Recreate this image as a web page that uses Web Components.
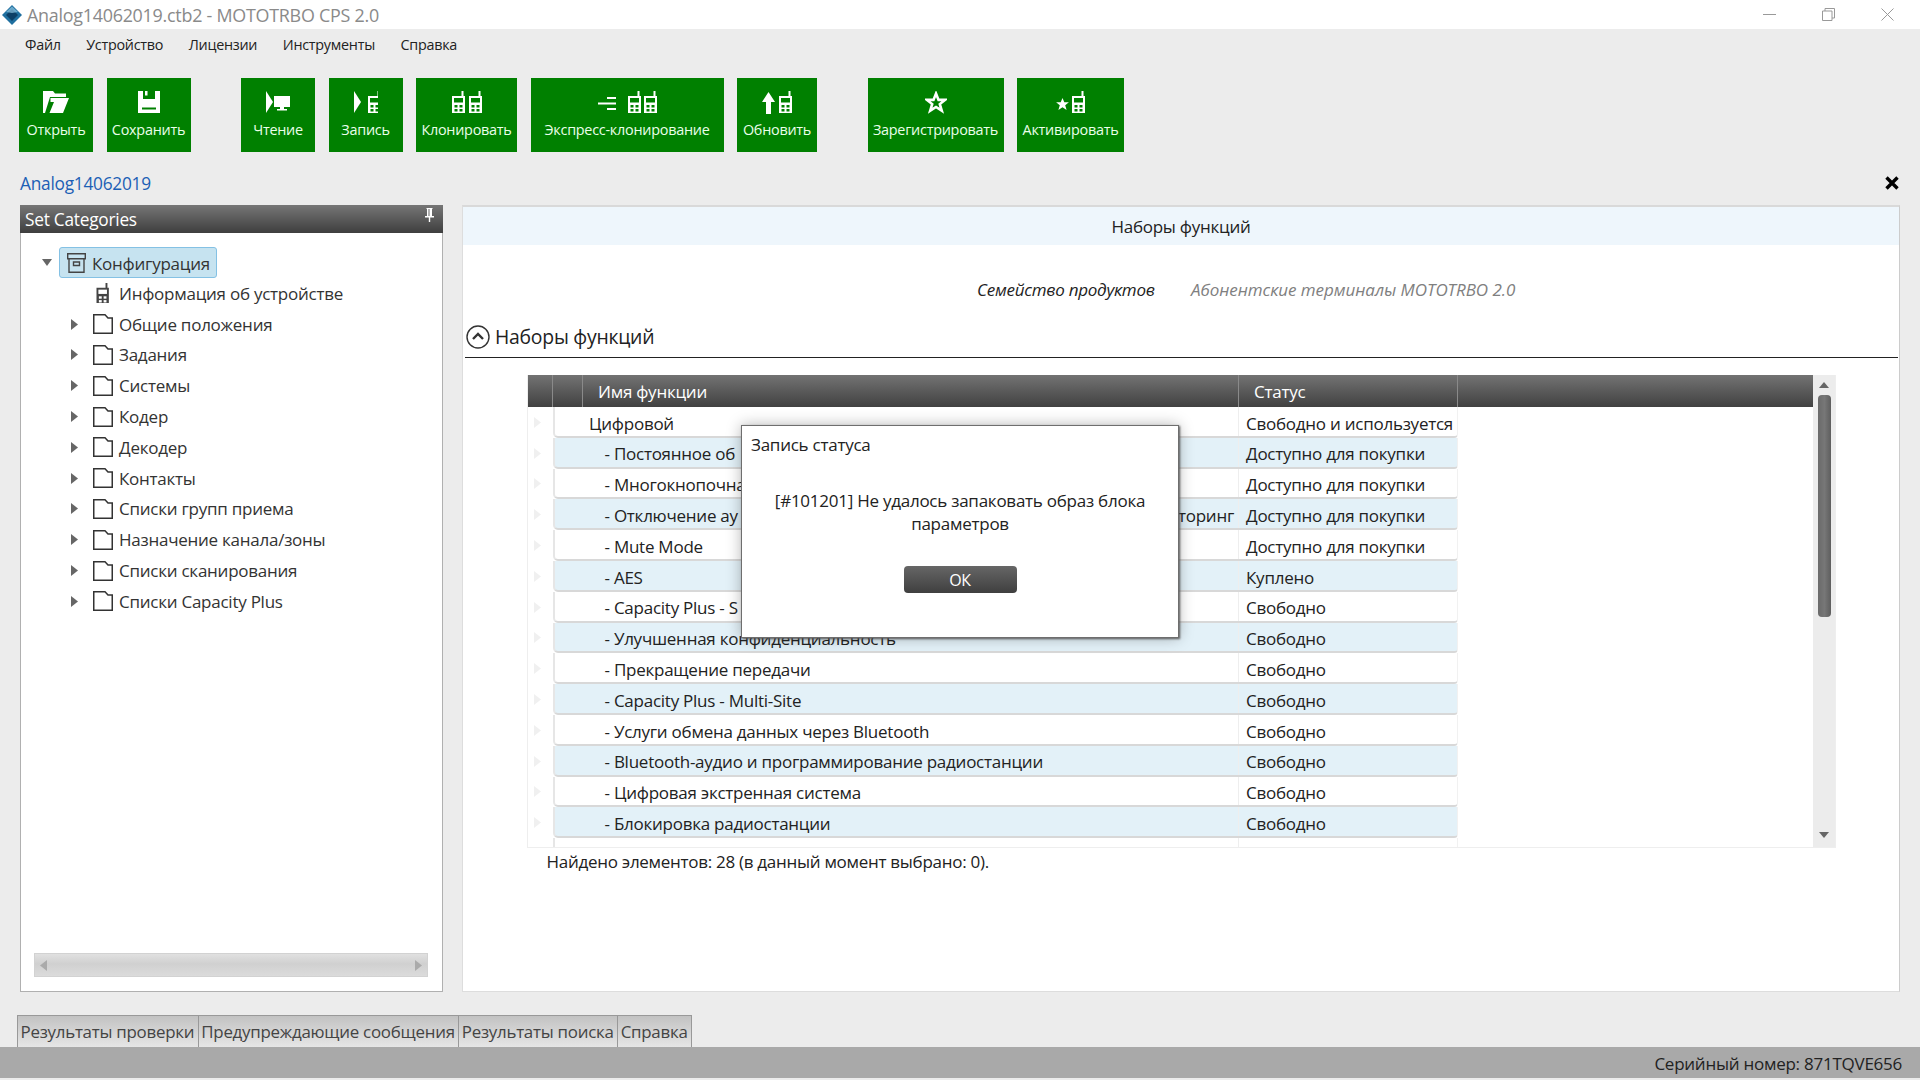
<!DOCTYPE html>
<html lang="ru"><head><meta charset="utf-8"><title>MOTOTRBO CPS 2.0</title>
<style>
html,body{margin:0;padding:0;width:1920px;height:1080px;overflow:hidden;background:#ececec}
body{font-family:"Open Sans","Noto Sans",sans-serif;font-size:17px;color:#222;letter-spacing:-.25px;position:relative}
</style></head><body>
<app-titlebar>Analog14062019.ctb2 - MOTOTRBO CPS 2.0</app-titlebar>
<app-menu><span>Файл</span><span>Устройство</span><span>Лицензии</span><span>Инструменты</span><span>Справка</span></app-menu>
<app-toolbar>
<tool-btn w="74" icon="open">Открыть</tool-btn><tool-btn w="84" icon="save">Сохранить</tool-btn>
<tool-btn w="74" icon="read" style="margin-left:37px">Чтение</tool-btn><tool-btn w="74" icon="write">Запись</tool-btn><tool-btn w="101" icon="clone">Клонировать</tool-btn><tool-btn w="193" icon="express">Экспресс-клонирование</tool-btn><tool-btn w="80" icon="update">Обновить</tool-btn>
<tool-btn w="136" icon="star" style="margin-left:37px">Зарегистрировать</tool-btn><tool-btn w="107" icon="activate">Активировать</tool-btn>
</app-toolbar>
<doc-tab>Analog14062019</doc-tab>
<app-main>
<tree-panel heading="Set Categories">
<tree-row kind="root">Конфигурация</tree-row>
<tree-row kind="device">Информация об устройстве</tree-row>
<tree-row>Общие положения</tree-row><tree-row>Задания</tree-row><tree-row>Системы</tree-row><tree-row>Кодер</tree-row><tree-row>Декодер</tree-row><tree-row>Контакты</tree-row><tree-row>Списки групп приема</tree-row><tree-row>Назначение канала/зоны</tree-row><tree-row>Списки сканирования</tree-row><tree-row>Списки Capacity Plus</tree-row>
</tree-panel>
<feature-panel>
<feature-row top status="Свободно и используется">Цифровой</feature-row>
<feature-row alt status="Доступно для покупки">- Постоянное об</feature-row>
<feature-row status="Доступно для покупки">- Многокнопочна</feature-row>
<feature-row alt status="Доступно для покупки" tail="торинг">- Отключение ау</feature-row>
<feature-row status="Доступно для покупки">- Mute Mode</feature-row>
<feature-row alt status="Куплено">- AES</feature-row>
<feature-row status="Свободно">- Capacity Plus - S</feature-row>
<feature-row alt status="Свободно">- Улучшенная конфиденциальность</feature-row>
<feature-row status="Свободно">- Прекращение передачи</feature-row>
<feature-row alt status="Свободно">- Capacity Plus - Multi-Site</feature-row>
<feature-row status="Свободно">- Услуги обмена данных через Bluetooth</feature-row>
<feature-row alt status="Свободно">- Bluetooth-аудио и программирование радиостанции</feature-row>
<feature-row status="Свободно">- Цифровая экстренная система</feature-row>
<feature-row alt status="Свободно">- Блокировка радиостанции</feature-row>
<feature-row status=""></feature-row>
</feature-panel>
</app-main>
<bottom-tabs><span>Результаты проверки</span><span>Предупреждающие сообщения</span><span>Результаты поиска</span><span>Справка</span></bottom-tabs>
<app-status>Серийный номер: 871TQVE656</app-status>
<status-dialog heading="Запись статуса">[#101201] Не удалось запаковать образ блока параметров</status-dialog>
<script>
const G='#008000';
const radio=(x,y,f='#fff',b=G)=>`<g transform="translate(${x} ${y})"><path fill="${f}" d="M9.500 0h2v5h1.500v17H0V5h9.500z"/><rect fill="${b}" x="2" y="7" width="9" height="4.500"/><g fill="${b}"><rect x="2.500" y="14" width="3" height="2.500"/><rect x="7.500" y="14" width="3" height="2.500"/><rect x="2.500" y="18" width="3" height="2.500"/><rect x="7.500" y="18" width="3" height="2.500"/></g></g>`;
const ICONS={
open:[26,`<path fill="#fff" d="M0 0h10l2 2.500h11V6H7L2 22H0z"/><path fill="#fff" d="M11 7h15l-6 15H6.500l4.500-11H7.500V7z"/>`],
save:[22,`<path fill="#fff" d="M0 0h5v8h12V0h5v22H0z"/><rect x="7" y="0" width="2.500" height="4.500" fill="#fff"/><rect x="4" y="16.500" width="14" height="2" fill="${G}"/>`],
read:[24,`<path fill="#fff" d="M0 0l7 11L0 22z"/><path fill="#fff" d="M8 5h16v11h-6v2h3v1.500h-10V18h3v-2H8z"/>`],
write:[24,`<path fill="#fff" d="M0 0l7 11L0 22z"/>${radio(14,0)}`],
clone:[30,radio(0,0)+radio(17,0)],
express:[59,`<g fill="#fff"><rect x="9" y="6" width="9" height="2"/><rect x="0" y="11.500" width="18" height="2"/><rect x="9" y="17" width="9" height="2"/></g>${radio(30,0)+radio(46,0)}`],
update:[30,`<path fill="#fff" d="M6.500 1L13 11H9v12H4V11H0z"/>${radio(17,0)}`],
star:[22,`<path fill="none" stroke="#fff" stroke-width="2.600" d="M11 2.600l2.500 6.300h6.500l-5.200 4.200 2 6.600L11 16l-5.800 3.700 2-6.600L2 8.900h6.500z"/>`],
activate:[29,`<path fill="#fff" d="M6.500 7l1.800 4.200h4.600l-3.700 3 1.400 4.800-4.100-2.700L2.400 19l1.400-4.800-3.700-3h4.600z"/>${radio(16,0)}`]
};
function def(name,render){customElements.define(name,class extends HTMLElement{constructor(){super();this.attachShadow({mode:'open'})}connectedCallback(){this.shadowRoot.innerHTML=render(this)}})}
def('app-titlebar',()=>`<style>:host{display:flex;align-items:center;height:29px;background:#fff;color:#8a8a8a;font-size:17.900px;padding-left:2px}
svg{display:block}.t{margin-left:5px;flex:1}.w{display:flex;gap:46px;padding-right:26px;align-items:center}</style>
<svg width="20" height="20" viewBox="0 0 20 20"><path fill="#1f6f9f" d="M10 0l10 10-10 10L0 10z"/><path fill="#0c3f66" d="M10 4l6 6-6 6-6-6z"/><path fill="#8cc3df" d="M10 1.500L4 7l6 1 6-1z" opacity=".7"/></svg><span class="t"><slot></slot></span>
<span class="w"><svg width="13" height="13" viewBox="0 0 13 13"><path stroke="#999" d="M0 6.500h13"/></svg><svg width="13" height="13" viewBox="0 0 13 13" fill="none" stroke="#999"><path d="M.5 3h9.500v9.500H.5z"/><path d="M3 3V.5h9.500V10H10"/></svg><svg width="13" height="13" viewBox="0 0 13 13"><path stroke="#999" d="M.5.5l12 12M12.500.5l-12 12"/></svg></span>`);
def('app-menu',()=>`<style>:host{display:flex;height:30px;align-items:center;padding-left:25px;gap:25.500px;font-size:14.350px;color:#222}::slotted(span){display:block}</style><slot></slot>`);
def('app-toolbar',()=>`<style>:host{display:flex;gap:13.500px;padding:19px 0 0 19px;height:74px}</style><slot></slot>`);
def('tool-btn',h=>{const [iw,svg]=ICONS[h.getAttribute('icon')];return `<style>:host{display:flex;flex-direction:column;align-items:center;width:${h.getAttribute('w')}px;flex:none;height:74px;background:${G};box-shadow:0 0 0 1px rgba(0,128,0,.25) inset;color:#eaffea;font-size:14.400px;box-sizing:border-box;padding-top:13px}svg{display:block;height:23px}.l{margin-top:5px;line-height:22px;white-space:nowrap}</style><svg width="${iw}" height="23" viewBox="0 0 ${iw} 23">${svg}</svg><div class="l"><slot></slot></div>`});
def('doc-tab',()=>`<style>:host{display:flex;height:53px;box-sizing:border-box;padding:20px 21px 0 20px;justify-content:space-between;color:#1c5fb5;font-size:17.300px;line-height:24px}svg{margin-top:4px;display:block}</style><span><slot></slot></span><svg width="14" height="14" viewBox="0 0 14 14"><path stroke="#000" stroke-width="3.400" d="M1.500 1.500l11 11M12.500 1.500l-11 11"/></svg>`);
def('app-main',()=>`<style>:host{display:flex;gap:19px;height:787px;padding:0 20px}</style><slot></slot>`);
def('tree-panel',h=>`<style>:host{display:flex;flex-direction:column;width:423px;height:787px;box-sizing:border-box;background:#fff;border:1px solid #b0b0b0;border-top:0;flex:none}
.h{height:28px;background:linear-gradient(#767676,#3e3e3e);color:#fff;display:flex;justify-content:space-between;align-items:center;padding:0 9px 0 5px;margin:0 -1px;font-size:17.300px}
.h svg{margin-top:-8px}.t{flex:1;padding-top:14px}
.s{height:24px;margin:0 14px 14px 13px;background:linear-gradient(#e2e2e2,#d0d0d0 45%,#dcdcdc);box-shadow:inset 0 0 0 1px #d2d2d2;display:flex;justify-content:space-between;align-items:center;padding:0 6px}</style>
<div class="h"><span>${h.getAttribute('heading')}</span><svg width="9" height="14" viewBox="0 0 9 14" fill="#fff"><path d="M1.500 0h6v1H7v7h2v1.500H5.200V14H3.800V9.500H0V8h2V1h-.5zM3.500 1v7h1V1z"/></svg></div>
<div class="t"><slot></slot></div>
<div class="s"><svg width="8" height="11"><path fill="#aaa" d="M7 0v11L0 5.500z"/></svg><svg width="8" height="11"><path fill="#aaa" d="M1 0v11l7-5.500z"/></svg></div>`);
def('tree-row',h=>{const k=h.getAttribute('kind');
const folder=`<svg width="20" height="20" viewBox="0 0 20 20"><path fill="none" stroke="#333" stroke-width="1.500" d="M.75.75H12L15 4h4.250v15.250H.75z"/></svg>`;
const dev=`<svg width="20" height="20" viewBox="0 0 20 20"><g transform="translate(3.500 0) scale(.95 .95)">${radio(0,0,'#444','#fff')}</g></svg>`;
const box=`<svg width="19" height="20" viewBox="0 0 19 20" fill="none" stroke="#444" stroke-width="1.400"><path d="M.7.7h17.600v5H.7zM2 5.700v13.600h15V5.700M6.500 9h6v3.500h-6z"/></svg>`;
const ar=`<svg width="7" height="11"><path fill="#666" d="M0 0v11l7-5.500z"/></svg>`;
const dn=`<svg width="10" height="7"><path fill="#666" d="M0 0h10L5 7z"/></svg>`;
if(k==='root')return `<style>:host{display:flex;align-items:center;height:31px;padding-left:21px;color:#333}.a{width:17px}.b{display:flex;align-items:center;gap:6px;height:31px;box-sizing:border-box;padding:1px 6px 0 7px;background:#c6e3f0;border:1px solid #84c1e4;border-radius:3px}svg{display:block}</style><span class="a">${dn}</span><span class="b">${box}<slot></slot></span>`;
return `<style>:host{display:flex;align-items:center;height:30.800px;padding-left:50px;gap:6px;color:#333}.a{width:16px;flex:none}svg{display:block}</style><span class="a">${k==='device'?'':ar}</span>${k==='device'?dev:folder}<slot></slot>`});
def('feature-panel',()=>`<style>:host{display:block;flex:none;width:1438px;height:787px;box-sizing:border-box;background:#fff;border-right:1px solid #ccc;border-bottom:1px solid #ddd;border-left:1px solid #ddd;border-top:2px solid #d9d9d9}
.band{height:38px;line-height:40px;text-align:center;background:#eef6fc}
.fam{display:flex;height:30px;align-items:center;margin-top:29px;padding-left:514px;font-style:italic}.fam b{font-weight:400;width:214px}.fam i{color:#808080;letter-spacing:-.05px}
.sec{display:flex;align-items:center;gap:5px;margin:22px 1px 0 2px;padding:0 0 10px 1px;border-bottom:1px solid #222;font-size:19.400px;box-sizing:border-box;height:32px}
svg{display:block}
.grid{display:flex;margin:17px 0 0 64px;width:1309px;height:473px;border:1px solid #eee;border-top:0;box-sizing:border-box}
.data{width:1286px;display:flex;flex-direction:column;overflow:hidden}
.head{display:flex;height:32px;flex:none;background:linear-gradient(#737373,#414141);color:#fff}
.head span{display:flex;align-items:center;box-sizing:border-box;border-right:1px solid #8a8a8a;flex:none}
.sb{width:22px;flex:none;background:#ececec;display:flex;flex-direction:column;align-items:center;padding-top:7px;box-sizing:border-box}
.th{width:13px;height:222px;border-radius:4px;background:linear-gradient(90deg,#6a6a6a,#777 50%,#5e5e5e);margin:7px 0 215px}
.foot{margin:3px 0 0 83.500px;line-height:22px;letter-spacing:-.28px}</style>
<div class="band">Наборы функций</div>
<div class="fam"><b>Семейство продуктов</b><i>Абонентские терминалы MOTOTRBO 2.0</i></div>
<div class="sec"><svg width="24" height="24" viewBox="0 0 24 24" fill="none" stroke="#333"><circle cx="12" cy="12" r="11" stroke-width="1.400"/><path stroke-width="2.400" d="M7 14l5-5 5 5"/></svg><span>Наборы функций</span></div>
<div class="grid"><div class="data"><div class="head"><span style="width:25px"></span><span style="width:30px"></span><span style="width:656px;padding-left:15px">Имя функции</span><span style="width:219px;padding-left:15px">Статус</span></div><div><slot></slot></div></div>
<div class="sb"><svg width="10" height="6"><path fill="#666" d="M5 0l5 6H0z"/></svg><div class="th"></div><svg width="10" height="6"><path fill="#666" d="M0 0h10L5 6z"/></svg></div></div>
<div class="foot">Найдено элементов: 28 (в данный момент выбрано: 0).</div>`);
def('feature-row',h=>{const alt=h.hasAttribute('alt');const tail=h.getAttribute('tail');const top=h.hasAttribute('top');
return `<style>:host{display:flex;height:30.800px;box-sizing:border-box;color:#222}
.c{width:25px;flex:none;display:flex;align-items:center;padding-left:6px;box-sizing:border-box}
.r{display:flex;width:905px;flex:none;box-sizing:border-box;background:${alt?'#e3f1f8':'#fff'};border:1px solid #f1f1f1;border-bottom:2px solid #d8d8d8;border-top:0;border-left:2px solid #e6e6e6;border-radius:0 0 4px 5px}
.n{width:684px;flex:none;box-sizing:border-box;padding:3.500px 4px 0 ${top?34:49.500}px;display:flex;justify-content:space-between;align-items:center;white-space:nowrap;border-right:1px solid #eee}
.s{padding:3.500px 0 0 7px;display:flex;align-items:center;white-space:nowrap}</style>
<div class="c"><svg width="7" height="11"><path fill="#f0f0f0" d="M0 0v11l7-5.500z"/></svg></div><div class="r"><div class="n"><span><slot></slot></span>${tail?`<span>${tail}</span>`:''}</div><div class="s">${h.getAttribute('status')}</div></div>`});
def('bottom-tabs',()=>`<style>:host{display:flex;height:32px;margin-top:23px;padding-left:17px;font-size:16.900px;color:#444}::slotted(span){display:flex;align-items:center;justify-content:center;box-sizing:border-box;padding:0 3.500px 0 2.500px;border:1px solid #999;border-bottom:0;background:linear-gradient(#c2c2c2,#e6e6e6);white-space:nowrap;margin-right:-1px}</style><slot></slot>`);
def('app-status',()=>`<style>:host{display:flex;justify-content:flex-end;align-items:center;height:31px;box-sizing:border-box;padding:2px 18px 0 0;background:#a9a9a9;color:#222}</style><slot></slot>`);
def('status-dialog',h=>`<style>:host{position:absolute;left:741px;top:425px;width:438px;height:213px;box-sizing:border-box;background:#fff;border:1px solid #6e6e6e;box-shadow:1px 1px 2px #555,0 0 14px rgba(0,0,0,.28);display:flex;flex-direction:column;align-items:center;color:#222}
.t{align-self:flex-start;margin:7px 0 0 9px;line-height:24px}.m{margin-top:32px;width:380px;text-align:center;line-height:23px}
.o{margin-top:31px;width:113px;height:27px;border-radius:4px;background:linear-gradient(#666,#3f3f3f);color:#fff;display:flex;align-items:center;justify-content:center;font-size:16px}</style>
<div class="t">${h.getAttribute('heading')}</div><div class="m"><slot></slot></div><div class="o">ОК</div>`);
</script>
</body></html>
